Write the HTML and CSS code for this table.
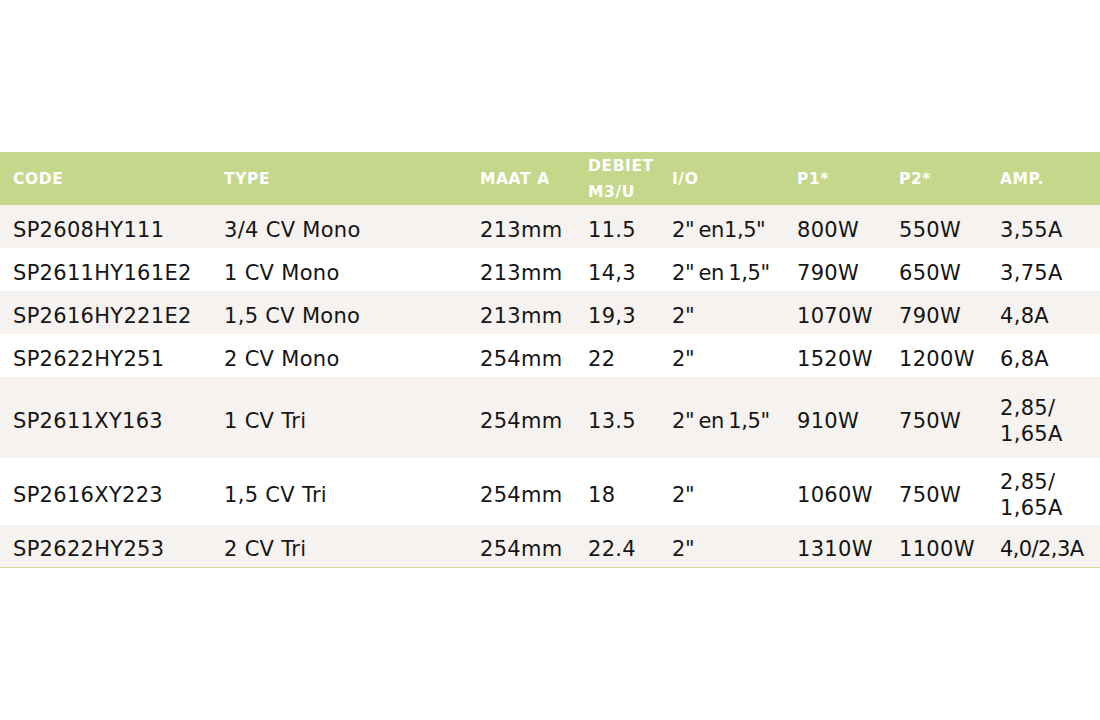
FILE: index.html
```html
<!DOCTYPE html>
<html lang="nl">
<head>
<meta charset="utf-8">
<title>Pompen</title>
<link rel="stylesheet" href="styles.css">
</head>
<body>
<main class="page">
  <table class="specs">
    <colgroup>
      <col class="c-code"><col class="c-type"><col class="c-maat"><col class="c-debiet"><col class="c-io"><col class="c-p1"><col class="c-p2"><col class="c-amp">
    </colgroup>
    <thead>
      <tr class="head">
        <th>CODE</th><th>TYPE</th><th>MAAT A</th><th>DEBIET<br>M3/U</th><th>I/O</th><th>P1*</th><th>P2*</th><th>AMP.</th>
      </tr>
    </thead>
    <tbody>
      <tr class="r alt"><td>SP2608HY111</td><td>3/4 CV Mono</td><td>213mm</td><td>11.5</td><td class="io">2" en1,5"</td><td>800W</td><td>550W</td><td>3,55A</td></tr>
      <tr class="r"><td>SP2611HY161E2</td><td>1 CV Mono</td><td>213mm</td><td>14,3</td><td class="io">2" en 1,5"</td><td>790W</td><td>650W</td><td>3,75A</td></tr>
      <tr class="r alt"><td>SP2616HY221E2</td><td>1,5 CV Mono</td><td>213mm</td><td>19,3</td><td class="io">2"</td><td>1070W</td><td>790W</td><td>4,8A</td></tr>
      <tr class="r"><td>SP2622HY251</td><td>2 CV Mono</td><td>254mm</td><td>22</td><td class="io">2"</td><td>1520W</td><td>1200W</td><td>6,8A</td></tr>
      <tr class="r alt tall"><td>SP2611XY163</td><td>1 CV Tri</td><td>254mm</td><td>13.5</td><td class="io">2" en 1,5"</td><td>910W</td><td>750W</td><td>2,85/<br>1,65A</td></tr>
      <tr class="r mid"><td>SP2616XY223</td><td>1,5 CV Tri</td><td>254mm</td><td>18</td><td class="io">2"</td><td>1060W</td><td>750W</td><td>2,85/<br>1,65A</td></tr>
      <tr class="r alt last"><td>SP2622HY253</td><td>2 CV Tri</td><td>254mm</td><td>22.4</td><td class="io">2"</td><td>1310W</td><td>1100W</td><td class="amp-tight">4,0/2,3A</td></tr>
    </tbody>
  </table>
</main>
</body>
</html>
```
FILE: styles.css
```css
html, body {
  margin: 0;
  padding: 0;
  background: #ffffff;
}
.page {
  padding-top: 152px;
}
.specs {
  width: 1100px;
  border-collapse: collapse;
  table-layout: fixed;
  font-family: "DejaVu Sans", "Noto Sans", sans-serif;
  color: #151515;
}
.c-code { width: 211px; }
.c-type { width: 256px; }
.c-maat { width: 108px; }
.c-debiet { width: 84px; }
.c-io { width: 125px; }
.c-p1 { width: 102px; }
.c-p2 { width: 101px; }
.c-amp { width: 113px; }
.head {
  background: #c5d78a;
  height: 53px;
}
.head th {
  color: #ffffff;
  font-weight: 700;
  font-size: 15.5px;
  line-height: 26px;
  text-align: left;
  padding: 0 0 0 13px;
  vertical-align: middle;
  letter-spacing: 0.6px;
}
.r td {
  font-size: 21px;
  line-height: 26px;
  padding: 6px 0 0 13px;
  vertical-align: middle;
  white-space: nowrap;
  letter-spacing: 0.3px;
}
.r td.io {
  letter-spacing: -0.4px;
  word-spacing: -2px;
}
.r td.amp-tight {
  letter-spacing: -0.6px;
}
.r { height: 43px; }
.r.alt { background: #f5f2ef; }
.r.tall { height: 81px; }
.r.mid { height: 67px; }
.r.last { height: 42px; border-bottom: 1px solid #cddc9c; }
```
